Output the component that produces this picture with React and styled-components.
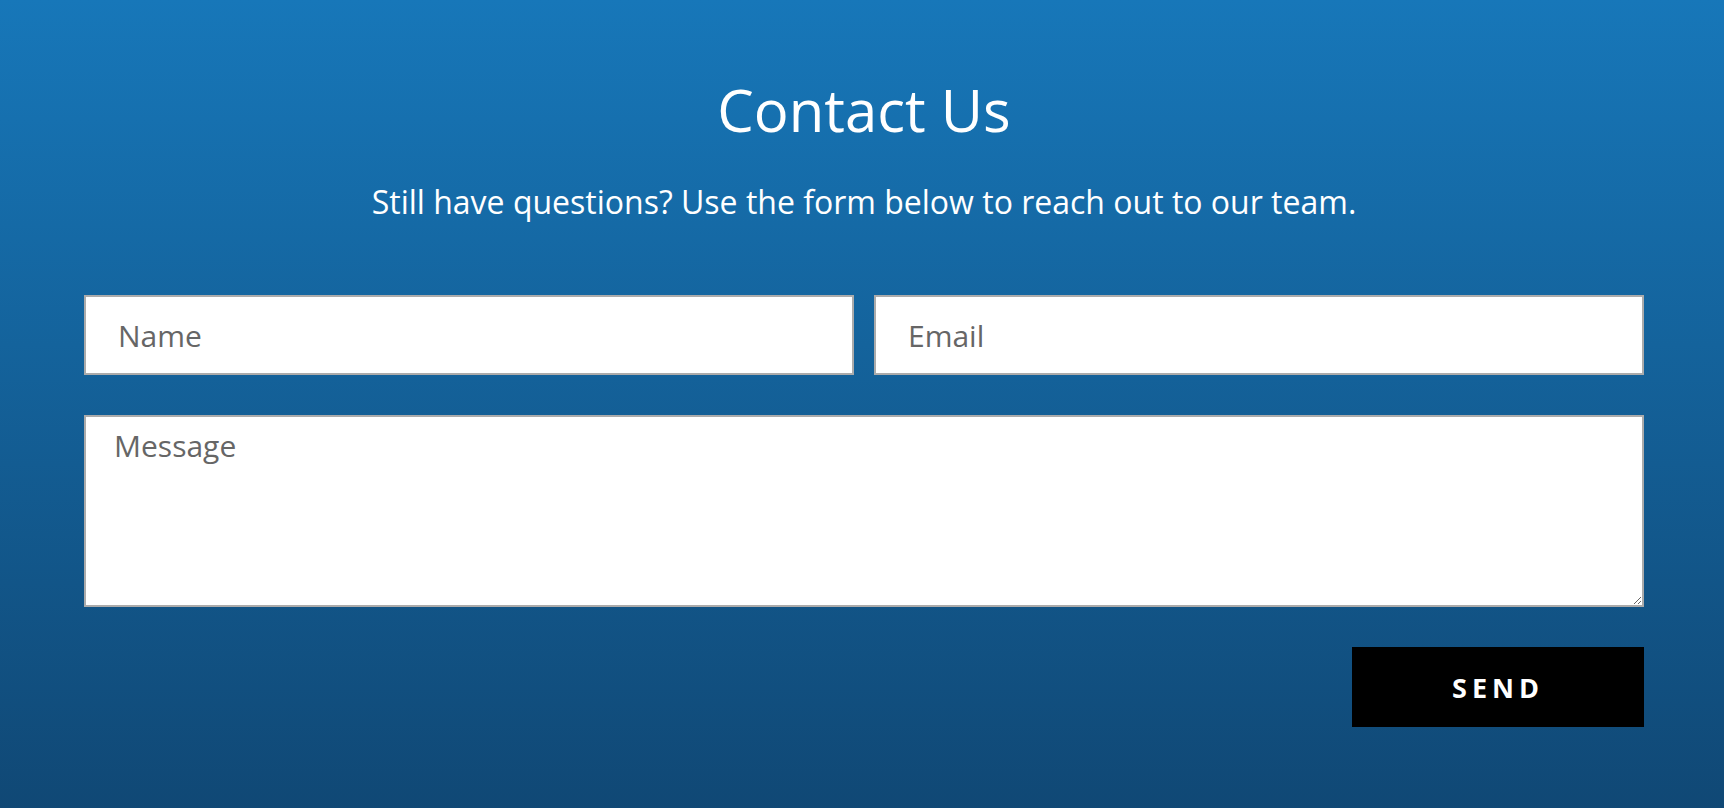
import styled, { createGlobalStyle } from 'styled-components';

const GlobalStyle = createGlobalStyle`
	html, body {
		margin: 0;
		padding: 0;
	}
	body {
		font-family: 'Open Sans', 'Liberation Sans', sans-serif;
	}
	* {
		box-sizing: border-box;
	}
`;

const Section = styled.section`
	min-height: 808px;
	background: linear-gradient(180deg, #1777b9 0%, #104875 100%);
	padding: 74px 80px 0 84px;
	color: #fff;
`;

const Title = styled.h1`
	margin: 0;
	font-size: 58px;
	line-height: 72px;
	font-weight: 400;
	text-align: center;
`;

const Subtitle = styled.p`
	margin: 36px 0 0;
	font-size: 32px;
	line-height: 40px;
	text-align: center;
`;

const Form = styled.form`
	margin-top: 73px;
	display: flex;
	flex-direction: column;
	gap: 40px;
`;

const Row = styled.div`
	display: grid;
	grid-template-columns: 1fr 1fr;
	gap: 20px;
`;

const fieldBase = `
	width: 100%;
	border: 2px solid #ababab;
	background: #fff;
	font-family: 'Open Sans', 'Liberation Sans', sans-serif;
	font-size: 30px;
	color: #333;
	outline: none;
	&::placeholder {
		color: #666;
		opacity: 1;
	}
`;

const Input = styled.input`
	${fieldBase}
	height: 80px;
	padding: 0 32px;
`;

const TextArea = styled.textarea`
	${fieldBase}
	display: block;
	height: 192px;
	padding: 9px 28px;
	line-height: 1.36;
	resize: both;
`;

const Actions = styled.div`
	display: flex;
	justify-content: flex-end;
`;

const Button = styled.button`
	width: 292px;
	height: 80px;
	border: none;
	background: #000;
	color: #fff;
	font-family: 'Open Sans', 'Liberation Sans', sans-serif;
	font-size: 27px;
	font-weight: 700;
	letter-spacing: 5px;
	text-transform: uppercase;
	cursor: pointer;
`;

const App = () => {
	return (
		<>
			<GlobalStyle />
			<Section>
				<Title>Contact Us</Title>
				<Subtitle>Still have questions? Use the form below to reach out to our team.</Subtitle>
				<Form onSubmit={(e) => e.preventDefault()}>
					<Row>
						<Input type="text" placeholder="Name" />
						<Input type="email" placeholder="Email" />
					</Row>
					<TextArea placeholder="Message" />
					<Actions>
						<Button type="submit">Send</Button>
					</Actions>
				</Form>
			</Section>
		</>
	);
};

export default App;
